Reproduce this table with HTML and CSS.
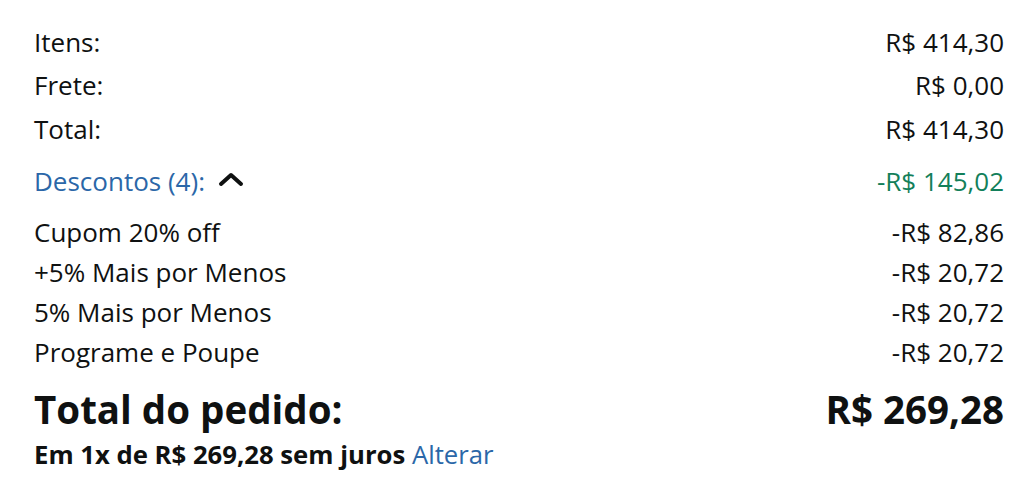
FILE: index.html
```html
<!DOCTYPE html>
<html lang="pt-BR">
<head>
<meta charset="utf-8">
<link rel="stylesheet" href="styles.css">
</head>
<body>
<div class="summary">
  <div class="row line"><span>Itens:</span><span>R$ 414,30</span></div>
  <div class="row line"><span>Frete:</span><span>R$ 0,00</span></div>
  <div class="row line"><span>Total:</span><span>R$ 414,30</span></div>
  <div class="row disc-head">
    <span class="link">Descontos (4):
      <svg class="chev" width="28" height="18" viewBox="0 0 28 18"><path d="M4 14 L14 5 L24 14" fill="none" stroke="#0f1111" stroke-width="4" stroke-linecap="round" stroke-linejoin="round"/></svg>
    </span>
    <span class="green">-R$ 145,02</span>
  </div>
  <div class="discounts">
    <div class="row dline"><span>Cupom 20% off</span><span>-R$ 82,86</span></div>
    <div class="row dline"><span>+5% Mais por Menos</span><span>-R$ 20,72</span></div>
    <div class="row dline"><span>5% Mais por Menos</span><span>-R$ 20,72</span></div>
    <div class="row dline"><span>Programe e Poupe</span><span>-R$ 20,72</span></div>
  </div>
  <div class="row grand"><span>Total do pedido:</span><span>R$ 269,28</span></div>
  <div class="install"><b>Em 1x de R$ 269,28 sem juros</b> <span class="link">Alterar</span></div>
</div>
</body>
</html>
```

FILE: styles.css
```css
html, body {
  margin: 0;
  padding: 0;
  background: #ffffff;
}
body {
  font-family: "Open Sans", "Noto Sans", sans-serif;
  color: #0f1111;
}
.summary {
  width: 970px;
  padding: 20px 31px 0 34px;
  font-size: 26px;
}
.row {
  display: flex;
  justify-content: space-between;
  align-items: center;
}
.line {
  height: 43.5px;
}
.disc-head {
  height: 60px;
}
.link {
  color: #2b67a8;
  display: inline-flex;
  align-items: center;
}
.chev {
  margin-left: 12px;
  margin-top: -4px;
}
.green {
  color: #137f5a;
}
.dline {
  height: 40px;
}
.discounts {
  padding-top: 1px;
}
.grand {
  font-size: 38.5px;
  font-weight: 700;
  height: 62px;
  margin-top: 6px;
}
.install {
  font-size: 25.7px;
  margin-top: -3px;
}
.install b {
  font-weight: 700;
}
```
